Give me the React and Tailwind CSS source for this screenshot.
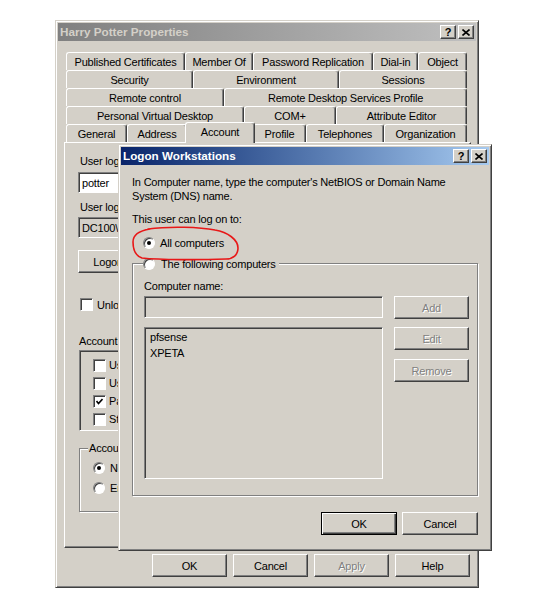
import React from 'react';

const raised =
  'border border-t-white border-l-white border-r-[#404040] border-b-[#404040] shadow-[inset_-1px_-1px_#808080]';
const sunken =
  'border border-t-[#808080] border-l-[#808080] border-r-white border-b-white shadow-[inset_1px_1px_#404040]';
const etched = 'border border-[#808080] shadow-[inset_1px_1px_white,1px_1px_white]';
const frame =
  'border border-t-[#d4d0c8] border-l-[#d4d0c8] border-r-[#404040] border-b-[#404040] shadow-[inset_1px_1px_white,inset_-1px_-1px_#808080] p-[2px]';

// tab strip, top row first
const tabRows = [
  [
    { label: 'Published Certificates', w: 'w-[119px]' },
    { label: 'Member Of', w: 'w-[68px]' },
    { label: 'Password Replication', w: 'w-[120px]' },
    { label: 'Dial-in', w: 'w-[45px]' },
    { label: 'Object', w: 'w-[49px]' },
  ],
  [
    { label: 'Security', w: 'w-[127px]' },
    { label: 'Environment', w: 'w-[146px]' },
    { label: 'Sessions', w: 'w-[128px]' },
  ],
  [
    { label: 'Remote control', w: 'w-[158px]' },
    { label: 'Remote Desktop Services Profile', w: 'w-[243px]' },
  ],
  [
    { label: 'Personal Virtual Desktop', w: 'w-[178px]' },
    { label: 'COM+', w: 'w-[92px]' },
    { label: 'Attribute Editor', w: 'w-[131px]' },
  ],
  [
    { label: 'General', w: 'w-[61px]' },
    { label: 'Address', w: 'w-[60px]' },
    { label: 'Account', w: 'w-[70px]', active: true },
    { label: 'Profile', w: 'w-[53px]' },
    { label: 'Telephones', w: 'w-[78px]' },
    { label: 'Organization', w: 'w-[83px]' },
  ],
];

const Tab = ({ label, w, active }) => (
  <div
    className={`${w} ${
      active ? 'h-[21px] -mx-[2px] -mb-[1px] relative z-10 pb-[2px]' : 'h-[18px]'
    } bg-[#d4d0c8] border-t border-l border-r border-t-white border-l-white border-r-[#404040] rounded-t-[3px] shadow-[inset_-1px_0_#808080] flex items-center justify-center whitespace-nowrap`}
  >
    {label}
  </div>
);

const Btn = ({ children, disabled, primary, className = '' }) => (
  <div
    className={`h-[23px] flex items-center justify-center bg-[#d4d0c8] ${
      primary
        ? 'border border-black shadow-[inset_1px_1px_white,inset_-1px_-1px_#404040,inset_-2px_-2px_#808080]'
        : raised
    } ${disabled ? 'text-[#808080] [text-shadow:1px_1px_0_white]' : ''} ${className}`}
  >
    {children}
  </div>
);

const CaptionBtn = ({ children, className = '' }) => (
  <div className={`w-[16px] h-[14px] bg-[#d4d0c8] ${raised} flex items-center justify-center ${className}`}>
    {children}
  </div>
);

const HelpGlyph = () => <span className="font-bold text-[11px] leading-none tracking-normal text-black">?</span>;

const CloseGlyph = () => (
  <svg width="8" height="7" viewBox="0 0 8 7">
    <path d="M0.5 0.5 L7.5 6.5 M7.5 0.5 L0.5 6.5" stroke="black" strokeWidth="1.6" />
  </svg>
);

const Check = ({ checked }) => (
  <div className={`w-[13px] h-[13px] bg-white ${sunken} flex items-center justify-center shrink-0`}>
    {checked && (
      <svg width="7" height="7" viewBox="0 0 7 7">
        <path d="M0.5 3 L2.5 5.5 L6.5 1" stroke="black" strokeWidth="1.6" fill="none" />
      </svg>
    )}
  </div>
);

const Radio = ({ on }) => (
  <div className="w-[12px] h-[12px] rounded-full bg-white border border-t-[#808080] border-l-[#808080] border-r-white border-b-white shadow-[inset_1px_1px_#404040] flex items-center justify-center shrink-0">
    {on && <div className="w-[4px] h-[4px] rounded-full bg-black" />}
  </div>
);

export default function App() {
  return (
    <div className="relative w-[534px] min-h-[601px] bg-white pt-[20px] pl-[55px] font-['Liberation_Sans',Arial,sans-serif] text-[11px] leading-[14px] tracking-[-0.2px] text-black">
      {/* Properties sheet */}
      <div className={`w-[424px] h-[568px] bg-[#d4d0c8] ${frame} flex flex-col`}>
        <div className="h-[18px] bg-linear-to-r from-[#808080] to-[#c0c0c0] flex items-center px-[2px]">
          <span className="flex-1 font-bold text-[11.7px] tracking-normal text-[#d4d0c8]">Harry Potter Properties</span>
          <CaptionBtn>
            <HelpGlyph />
          </CaptionBtn>
          <CaptionBtn className="ml-[2px]">
            <CloseGlyph />
          </CaptionBtn>
        </div>

        <div className="mt-[11px] ml-[8px] flex flex-col">
          {tabRows.map((row, i) => (
            <div key={i} className="flex items-end h-[18px]">
              {row.map((t) => (
                <Tab key={t.label} {...t} />
              ))}
            </div>
          ))}
        </div>

        <div className={`ml-[6px] w-[407px] h-[406px] bg-[#d4d0c8] ${raised} pl-[13px] pt-[11px] flex flex-col items-start`}>
          <span className="ml-[2px] whitespace-nowrap">User logon name:</span>
          <div className={`mt-[4px] w-[170px] h-[21px] bg-white ${sunken} flex items-center pl-[3px]`}>potter</div>
          <span className="mt-[7px] ml-[2px] whitespace-nowrap">User logon name (pre-Windows 2000):</span>
          <div className={`mt-[3px] w-[170px] h-[21px] bg-[#d4d0c8] ${sunken} flex items-center pl-[3px]`}>DC100\</div>
          <Btn className="mt-[12px] w-[100px]">Logon Hours...</Btn>
          <div className="mt-[25px] ml-[2px] flex items-center gap-[4px] h-[13px]">
            <Check />
            <span className="whitespace-nowrap">Unlock account</span>
          </div>
          <span className="mt-[23px] ml-[1px] whitespace-nowrap">Account options:</span>
          <div className={`mt-[2px] ml-[1px] w-[300px] h-[81px] bg-[#d4d0c8] ${sunken} pl-[13px] pt-[5px] flex flex-col`}>
            {[
              ['User must change password at next logon', false],
              ['User cannot change password', false],
              ['Password never expires', true],
              ['Store password using reversible encryption', false],
            ].map(([label, on]) => (
              <div key={label} className="h-[18px] flex items-center gap-[3px] whitespace-nowrap">
                <Check checked={on} />
                <span>{label}</span>
              </div>
            ))}
          </div>
          <div className={`mt-[17px] ml-[1px] w-[300px] h-[64px] ${etched} flex flex-col`}>
            <span className="-mt-[8px] ml-[8px] px-[1px] w-fit bg-[#d4d0c8]">Account expires</span>
            <div className="mt-[6px] ml-[13px] h-[14px] flex items-center gap-[5px]">
              <Radio on />
              <span>Never</span>
            </div>
            <div className="mt-[6px] ml-[13px] h-[14px] flex items-center gap-[5px]">
              <Radio />
              <span>End of:</span>
            </div>
          </div>
        </div>

        <div className="mt-[6px] ml-[94px] flex gap-[6px]">
          <Btn className="w-[75px]">OK</Btn>
          <Btn className="w-[75px]">Cancel</Btn>
          <Btn className="w-[75px]" disabled>
            Apply
          </Btn>
          <Btn className="w-[75px]">Help</Btn>
        </div>
      </div>

      {/* Logon Workstations dialog on top */}
      <div className={`absolute left-[118px] top-[144px] w-[374px] h-[407px] bg-[#d4d0c8] ${frame} flex flex-col`}>
        <div className="h-[18px] bg-linear-to-r from-[#0a246a] to-[#a6caf0] flex items-center px-[2px]">
          <span className="flex-1 font-bold text-[11.7px] tracking-normal text-white">Logon Workstations</span>
          <CaptionBtn>
            <HelpGlyph />
          </CaptionBtn>
          <CaptionBtn className="ml-[2px]">
            <CloseGlyph />
          </CaptionBtn>
        </div>

        <div className="px-[11px] flex flex-col">
          <p className="mt-[10px]">
            In Computer name, type the computer's NetBIOS or Domain Name
            <br />
            System (DNS) name.
          </p>
          <p className="mt-[9px]">This user can log on to:</p>
          <div className="mt-[10px] ml-[11px] h-[14px] flex items-center gap-[5px]">
            <Radio on />
            <span>All computers</span>
          </div>

          <div className={`mt-[13px] ${etched} flex flex-col pb-[16px]`}>
            <div className="-mt-[7px] ml-[10px] pr-[3px] w-fit h-[14px] bg-[#d4d0c8] flex items-center gap-[6px]">
              <Radio />
              <span>The following computers</span>
            </div>
            <span className="mt-[8px] ml-[11px]">Computer name:</span>
            <div className="mt-[3px] ml-[11px] flex gap-[11px]">
              <div className="w-[239px] flex flex-col">
                <div className={`h-[22px] bg-[#d4d0c8] ${sunken}`} />
                <div className={`mt-[9px] h-[152px] bg-[#d4d0c8] ${sunken} pl-[5px] pt-[1px] leading-[16px] flex flex-col`}>
                  <span>pfsense</span>
                  <span>XPETA</span>
                </div>
              </div>
              <div className="w-[75px] flex flex-col">
                <Btn disabled>Add</Btn>
                <Btn disabled className="mt-[8px]">
                  Edit
                </Btn>
                <Btn disabled className="mt-[9px]">
                  Remove
                </Btn>
              </div>
            </div>
          </div>

          <div className="mt-[16px] flex justify-end gap-[5px]">
            <Btn primary className="w-[76px]">
              OK
            </Btn>
            <Btn className="w-[76px]">Cancel</Btn>
          </div>
        </div>

        {/* red hand-drawn marker around "All computers" */}
        <svg className="absolute left-0 top-0 pointer-events-none" width="372" height="405" viewBox="0 0 372 405">
          <path
            d="M29 84 C51 81, 81 82, 96 85 C109 87, 119 95, 119 103 C119 110, 114 114, 107 114 C81 115, 41 115, 23 113 C17 111, 14 105, 14 97 C14 91, 18 86, 31 84"
            fill="none"
            stroke="#e81818"
            strokeWidth="1.6"
            strokeLinecap="round"
          />
        </svg>
      </div>
    </div>
  );
}
